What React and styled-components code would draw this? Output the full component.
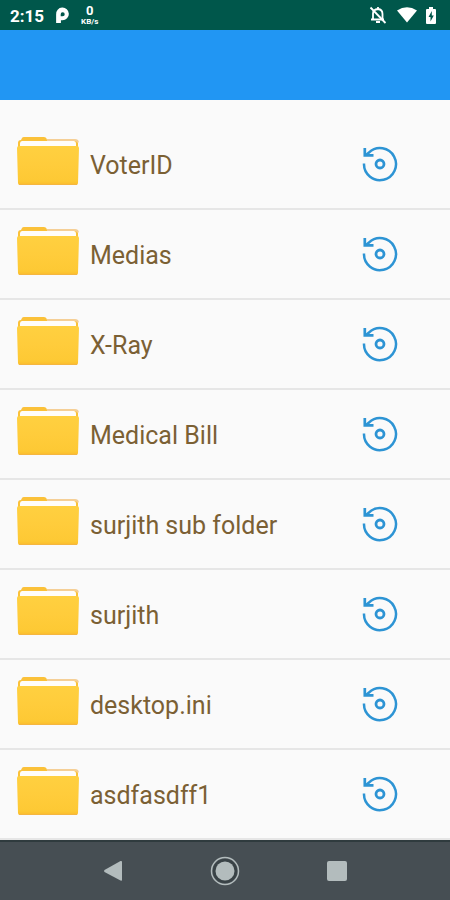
import React from "react";
import styled, { createGlobalStyle } from "styled-components";

const GlobalStyle = createGlobalStyle`
  * { box-sizing: border-box; }
  body { margin: 0; background: #fafafa; font-family: Roboto, sans-serif; }
`;

const Screen = styled.div`
  display: flex;
  flex-direction: column;
  min-height: 100vh;
  background: #fafafa;
`;

const StatusBar = styled.div`
  display: flex;
  align-items: center;
  justify-content: space-between;
  height: 30px;
  padding: 0 14px 0 10px;
  background: #00574b;
  color: #fff;
`;

const StatusGroup = styled.div`
  display: flex;
  align-items: center;
  gap: ${(p) => p.$gap}px;
`;

const Clock = styled.span`
  font-size: 17px;
  font-weight: 700;
  line-height: 20px;
  padding-top: 2px;
`;

const NetSpeed = styled.div`
  display: flex;
  flex-direction: column;
  align-items: center;
  padding-top: 1px;
  font-weight: 700;
`;

const SpeedValue = styled.span`
  font-size: 13px;
  line-height: 12px;
`;

const SpeedUnit = styled.span`
  font-size: 8px;
  line-height: 9px;
`;

const AppBar = styled.header`
  height: 70px;
  background: #2196f3;
`;

const FolderList = styled.ul`
  flex: 1;
  list-style: none;
  margin: 0;
  padding: 20px 0 0;
`;

const FolderRow = styled.li`
  display: flex;
  align-items: center;
  height: 90px;
  padding: 0 51px 0 16px;
  border-bottom: 2px solid #e6e6e6;
`;

const FolderArt = styled.svg`
  flex: none;
  margin-bottom: 4px;
`;

const FolderName = styled.span`
  flex: 1;
  margin-left: 10px;
  padding-top: 3px;
  color: #7b6034;
  font-size: 25px;
  line-height: 30px;
`;

const IconButton = styled.button`
  display: flex;
  padding: 0;
  border: 0;
  background: none;
  color: #2d94d4;
  cursor: pointer;
`;

const NavBar = styled.nav`
  display: grid;
  grid-template-columns: repeat(3, 112px);
  justify-content: center;
  justify-items: center;
  align-items: center;
  height: 60px;
  border-top: 2px solid #2f3b3e;
  background: #464e53;
`;

const NavButton = styled(IconButton)`
  color: #b3bcbd;
`;

const folders = [
  "VoterID",
  "Medias",
  "X-Ray",
  "Medical Bill",
  "surjith sub folder",
  "surjith",
  "desktop.ini",
  "asdfasdff1",
];

function FolderIcon() {
  return (
    <FolderArt width="64" height="52" viewBox="0 0 64 52" aria-hidden="true">
      <defs>
        <linearGradient id="folderFront" x1="0" y1="0" x2="0" y2="1">
          <stop offset="0" stopColor="#ffd040" />
          <stop offset="0.5" stopColor="#ffcc3b" />
          <stop offset="0.9" stopColor="#fdc934" />
          <stop offset="1" stopColor="#fbbb2c" />
        </linearGradient>
      </defs>
      <path d="M2 14V7Q2 4 5 4L6 2Q6.500 1 8 1H28Q30 1 30.500 2.500L31 4H59Q62 4 62 7V14Z" fill="#fbc139" />
      <path d="M31 4H59Q61.500 4 62 6.500" fill="none" stroke="#f5cf96" strokeWidth="2" />
      <path d="M4 12V7.500Q4 5 6 5H58Q60 5 60 7.500V12Z" fill="#fffdfa" />
      <path d="M1 12Q1 10 3 10H61Q63 10 63 12L62 47Q62 49 60 49H4Q2 49 2 47Z" fill="url(#folderFront)" />
      <path d="M3 48.500H61" stroke="#f5b640" strokeWidth="1" />
    </FolderArt>
  );
}

function RestoreIcon() {
  return (
    <svg width="38" height="38" viewBox="0 0 38 38" fill="none" stroke="currentColor" aria-hidden="true">
      <path d="M3 18.500A16 16 0 1 0 8 7.500L5.500 9.500" strokeWidth="2.500" />
      <path d="M3.800 3V10.400H12.500" strokeWidth="2.700" />
      <circle cx="19" cy="19" r="4" strokeWidth="2.800" />
    </svg>
  );
}

export default function App() {
  return (
    <Screen>
      <GlobalStyle />
      <StatusBar>
        <StatusGroup $gap={11}>
          <Clock>2:15</Clock>
          <svg width="15" height="17" viewBox="0 0 14 16" aria-hidden="true">
            <path d="M1 15V7A6 6 0 1 1 7 12.500H5.500V15Z" fill="#fff" />
            <path d="M5.300 8.800V7A1.900 1.900 0 1 1 7.200 8.800Z" fill="#00574b" />
          </svg>
          <NetSpeed>
            <SpeedValue>0</SpeedValue>
            <SpeedUnit>KB/s</SpeedUnit>
          </NetSpeed>
        </StatusGroup>
        <StatusGroup $gap={9}>
          <svg width="20" height="20" viewBox="0 0 20 20" fill="none" stroke="#fff" strokeWidth="1.800" aria-hidden="true">
            <path d="M5 14V8.500Q5 4.500 10 4Q14.500 4.500 14.500 9V14M3 14.500H16M10 2V4" />
            <path d="M8 17H12" strokeWidth="2" />
            <path d="M2.500 2.500L17.500 18" />
          </svg>
          <svg width="20" height="16" viewBox="0 0 20 16" aria-hidden="true">
            <path d="M0 3.500Q10 -3 20 3.500L10 15.500Z" fill="#fff" />
          </svg>
          <svg width="10" height="17" viewBox="0 0 10 17" aria-hidden="true">
            <path d="M3 0H7V2H9Q10 2 10 3V16Q10 17 9 17H1Q0 17 0 16V3Q0 2 1 2H3Z" fill="#fff" />
            <path d="M5.800 4L2.500 10H4.500V14.500L7.800 8.500H5.800Z" fill="#00574b" />
          </svg>
        </StatusGroup>
      </StatusBar>
      <AppBar />
      <FolderList>
        {folders.map((name) => (
          <FolderRow key={name}>
            <FolderIcon />
            <FolderName>{name}</FolderName>
            <IconButton type="button" aria-label={`Restore ${name}`}>
              <RestoreIcon />
            </IconButton>
          </FolderRow>
        ))}
      </FolderList>
      <NavBar>
        <NavButton type="button" aria-label="Back">
          <svg width="20" height="22" viewBox="0 0 20 22" aria-hidden="true">
            <path d="M1.500 10L17.500 1Q19 .5 19 2V20Q19 21 17.500 20.500L1.500 12Q.5 11 1.500 10Z" fill="currentColor" />
          </svg>
        </NavButton>
        <NavButton type="button" aria-label="Home">
          <svg width="30" height="30" viewBox="0 0 30 30" aria-hidden="true">
            <circle cx="15" cy="15" r="12" fill="#394246" />
            <circle cx="15" cy="15" r="13.500" fill="none" stroke="currentColor" strokeWidth="1.500" />
            <circle cx="15" cy="15" r="9.500" fill="currentColor" />
          </svg>
        </NavButton>
        <NavButton type="button" aria-label="Recent apps">
          <svg width="20" height="20" viewBox="0 0 20 20" aria-hidden="true">
            <rect width="20" height="20" rx="2" fill="currentColor" />
          </svg>
        </NavButton>
      </NavBar>
    </Screen>
  );
}
